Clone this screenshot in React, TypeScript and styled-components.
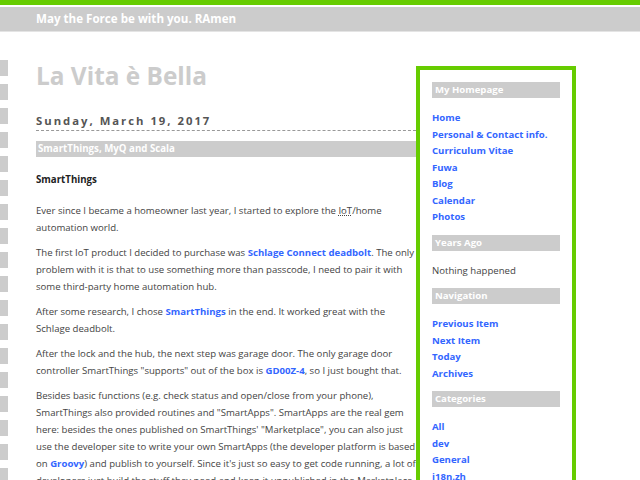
import styled, { createGlobalStyle } from 'styled-components';

const GlobalStyle = createGlobalStyle`
  html, body {
    margin: 0;
    padding: 0;
    background: #fff;
  }

  body {
    font-family: 'Open Sans', 'Liberation Sans', sans-serif;
    font-size: 9.6px;
    color: #444;
    overflow: hidden;
  }
`;

const TopBar = styled.header`
  border-top: 5px solid #66cc00;
`;

const Banner = styled.div`
  height: 24px;
  margin-top: 2px;
  padding-left: 36px;
  background: #cccccc;
  border-bottom: 1px solid #e4e4e4;
  color: #fff;
  font-weight: 700;
  font-size: 11.6px;
  line-height: 24px;
`;

const Page = styled.div`
  display: flex;
`;

// the grey dashes down the left edge
const Rail = styled.div`
  flex: 0 0 8px;
  margin-top: 28px;
  background: repeating-linear-gradient(
    to bottom,
    #cccccc 0,
    #cccccc 16px,
    transparent 16px,
    transparent 24px
  );
`;

const Wrapper = styled.div`
  display: flex;
  align-items: flex-start;
  padding: 28px 0 0 28px;
`;

const Main = styled.main`
  flex: 0 0 380px;
  width: 380px;
`;

const SiteTitle = styled.h1`
  margin: 0;
  font-size: 24.4px;
  line-height: 32px;
  font-weight: 700;
  color: #cccccc;
`;

const DateLine = styled.h2`
  margin: 20px 0 0;
  font-size: 11.3px;
  line-height: 18px;
  font-weight: 700;
  letter-spacing: 2px;
  color: #555;
  border-bottom: 1px dashed #999;
`;

const PostTitle = styled.h3`
  margin: 10px 0 0;
  height: 16px;
  padding-left: 2px;
  background: #cccccc;
  color: #fff;
  font-size: 9.7px;
  line-height: 16px;
  font-weight: 700;
`;

const SubHeading = styled.h4`
  margin: 14px 0 14px;
  font-size: 9.7px;
  line-height: 17px;
  font-weight: 700;
  color: #222;
`;

const Para = styled.p`
  margin: 0 0 8px;
  line-height: 17px;
`;

const A = styled.a`
  color: #3366ff;
  font-weight: 700;
  text-decoration: none;
`;

const Abbr = styled.abbr`
  text-decoration: underline dotted;
`;

const Sidebar = styled.aside`
  flex: 0 0 160px;
  box-sizing: border-box;
  width: 160px;
  margin-top: 6px;
  padding: 12px 12px 20px;
  border: 4px solid #66cc00;
`;

const Section = styled.section`
  margin-bottom: 9px;
`;

const SideHeading = styled.h2`
  margin: 0 0 12px;
  height: 16px;
  padding-left: 3px;
  background: #cccccc;
  color: #fff;
  font-size: 9.6px;
  line-height: 16px;
  font-weight: 700;
`;

const LinkList = styled.ul`
  margin: 0;
  padding: 0;
  list-style: none;
  line-height: 16.5px;
`;

const SideText = styled.div`
  line-height: 16.5px;
`;

const sections: { title: string; links?: string[]; text?: string }[] = [
  {
    title: 'My Homepage',
    links: ['Home', 'Personal & Contact info.', 'Curriculum Vitae', 'Fuwa', 'Blog', 'Calendar', 'Photos'],
  },
  { title: 'Years Ago', text: 'Nothing happened' },
  { title: 'Navigation', links: ['Previous Item', 'Next Item', 'Today', 'Archives'] },
  { title: 'Categories', links: ['All', 'dev', 'General', 'i18n.zh', 'Life', 'Photos'] },
];

export default function App() {
  return (
    <>
      <GlobalStyle />
      <TopBar>
        <Banner>May the Force be with you. RAmen</Banner>
      </TopBar>

      <Page>
        <Rail />

        <Wrapper>
          <Main>
            <SiteTitle>La Vita è Bella</SiteTitle>
            <DateLine>Sunday, March 19, 2017</DateLine>
            <PostTitle>SmartThings, MyQ and Scala</PostTitle>

            <SubHeading>SmartThings</SubHeading>

            <Para>
              Ever since I became a homeowner last year, I started to explore the{' '}
              <Abbr title="Internet of Things">IoT</Abbr>/home automation world.
            </Para>

            <Para>
              The first IoT product I decided to purchase was <A href="#">Schlage Connect deadbolt</A>. The only
              problem with it is that to use something more than passcode, I need to pair it with some
              third-party home automation hub.
            </Para>

            <Para>
              After some research, I chose <A href="#">SmartThings</A> in the end. It worked great with the
              Schlage deadbolt.
            </Para>

            <Para>
              After the lock and the hub, the next step was garage door. The only garage door controller
              SmartThings "supports" out of the box is <A href="#">GD00Z-4</A>, so I just bought that.
            </Para>

            <Para>
              Besides basic functions (e.g. check status and open/close from your phone), SmartThings also
              provided routines and "SmartApps". SmartApps are the real gem here: besides the ones published on
              SmartThings' "Marketplace", you can also just use the developer site to write your own SmartApps
              (the developer platform is based on <A href="#">Groovy</A>) and publish to yourself. Since it's
              just so easy to get code running, a lot of developers just build the stuff they need and keep it
              unpublished in the Marketplace.
            </Para>
          </Main>

          <Sidebar>
            {sections.map((section) => (
              <Section key={section.title}>
                <SideHeading>{section.title}</SideHeading>
                {section.links ? (
                  <LinkList>
                    {section.links.map((link) => (
                      <li key={link}>
                        <A href="#">{link}</A>
                      </li>
                    ))}
                  </LinkList>
                ) : (
                  <SideText>{section.text}</SideText>
                )}
              </Section>
            ))}
          </Sidebar>
        </Wrapper>
      </Page>
    </>
  );
}
